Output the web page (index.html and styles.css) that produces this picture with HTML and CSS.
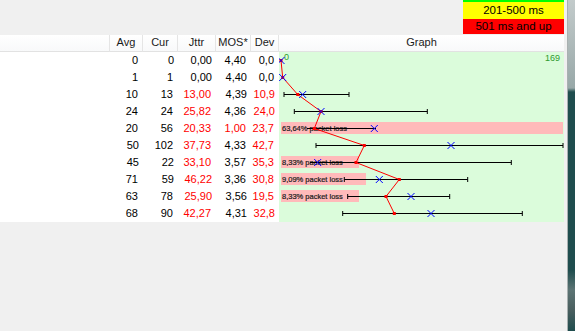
FILE: index.html
```html
<!DOCTYPE html>
<html lang="en">
<head>
    <meta charset="UTF-8">
    <title>Ping Monitor</title>
    <link rel="stylesheet" href="styles.css">
</head>
<body>
    <div class="window">
        <div class="main">
            <div class="topbar">
                <div class="legend">
                    <div class="legend-green"></div>
                    <div class="legend-yellow">201-500 ms</div>
                    <div class="legend-red">501 ms and up</div>
                </div>
            </div>

            <div class="table">
                <div class="th"></div>
                <div class="th">Avg</div>
                <div class="th">Cur</div>
                <div class="th">Jttr</div>
                <div class="th">MOS*</div>
                <div class="th">Dev</div>
                <div class="th th-last">Graph</div>

                <div class="graph-cell">
                    <svg class="graph" width="285" height="170" viewBox="0 0 285 170">
                        <!-- packet loss bars -->
                        <rect class="loss" x="2" y="70" width="282" height="12"/>
                        <rect class="loss" x="2" y="104" width="78" height="12"/>
                        <rect class="loss" x="2" y="121" width="85" height="12"/>
                        <rect class="loss" x="2" y="138" width="78" height="12"/>
                        <text class="loss-text" x="3" y="79">63,64% packet loss</text>
                        <text class="loss-text" x="3" y="113">8,33% packet loss</text>
                        <text class="loss-text" x="3" y="130">9,09% packet loss</text>
                        <text class="loss-text" x="3" y="147">8,33% packet loss</text>

                        <text class="scale" x="5" y="8">0</text>
                        <text class="scale" x="281" y="9" text-anchor="end">169</text>

                        <!-- min / max ranges -->
                        <g class="range">
                            <path d="M5 42.5H70M5 40v5M70 40v5"/>
                            <path d="M15.3 59.5H148.3M15.3 57v5M148.3 57v5"/>
                            <path d="M28 76.5H97"/>
                            <path d="M37 93.5H284M37 91v5M284 91v5"/>
                            <path d="M31 110.5H232.3M232.3 108v5"/>
                            <path d="M65.3 127.5H188.7M65.3 125v5M188.7 125v5"/>
                            <path d="M68.7 144.5H170.7M68.7 142v5M170.7 142v5"/>
                            <path d="M63.7 161.5H243.3M63.7 159v5M243.3 159v5"/>
                        </g>

                        <!-- average line -->
                        <polyline class="avg-line" points="2,8.5 3.7,25.5 18.7,42.5 42,59.5 35.3,76.5 85.3,93.5 77,110.5 120.3,127.5 107,144.5 115.3,161.5"/>
                        <g class="avg-dot">
                            <rect x="0.5" y="7" width="3" height="3"/>
                            <rect x="2.2" y="24" width="3" height="3"/>
                            <rect x="17.2" y="41" width="3" height="3"/>
                            <rect x="40.5" y="58" width="3" height="3"/>
                            <rect x="33.8" y="75" width="3" height="3"/>
                            <rect x="83.8" y="92" width="3" height="3"/>
                            <rect x="75.5" y="109" width="3" height="3"/>
                            <rect x="118.8" y="126" width="3" height="3"/>
                            <rect x="105.5" y="143" width="3" height="3"/>
                            <rect x="113.8" y="160" width="3" height="3"/>
                        </g>

                        <!-- current value -->
                        <g class="cur">
                            <path d="M-1.5 5l7 7M-1.5 12l7-7"/>
                            <path d="M0.2 22l7 7M0.2 29l7-7"/>
                            <path d="M20.2 39l7 7M20.2 46l7-7"/>
                            <path d="M38.5 56l7 7M38.5 63l7-7"/>
                            <path d="M91.8 73l7 7M91.8 80l7-7"/>
                            <path d="M168.5 90l7 7M168.5 97l7-7"/>
                            <path d="M35.2 107l7 7M35.2 114l7-7"/>
                            <path d="M96.8 124l7 7M96.8 131l7-7"/>
                            <path d="M128.5 141l7 7M128.5 148l7-7"/>
                            <path d="M148.5 158l7 7M148.5 165l7-7"/>
                        </g>
                    </svg>
                </div>

                <div></div><div class="td">0</div><div class="td">0</div><div class="td">0,00</div><div class="td">4,40</div><div class="td">0,0</div>
                <div></div><div class="td">1</div><div class="td">1</div><div class="td">0,00</div><div class="td">4,40</div><div class="td">0,0</div>
                <div></div><div class="td">10</div><div class="td">13</div><div class="td bad">13,00</div><div class="td">4,39</div><div class="td bad">10,9</div>
                <div></div><div class="td">24</div><div class="td">24</div><div class="td bad">25,82</div><div class="td">4,36</div><div class="td bad">24,0</div>
                <div></div><div class="td">20</div><div class="td">56</div><div class="td bad">20,33</div><div class="td bad">1,00</div><div class="td bad">23,7</div>
                <div></div><div class="td">50</div><div class="td">102</div><div class="td bad">37,73</div><div class="td">4,33</div><div class="td bad">42,7</div>
                <div></div><div class="td">45</div><div class="td">22</div><div class="td bad">33,10</div><div class="td">3,57</div><div class="td bad">35,3</div>
                <div></div><div class="td">71</div><div class="td">59</div><div class="td bad">46,22</div><div class="td">3,36</div><div class="td bad">30,8</div>
                <div></div><div class="td">63</div><div class="td">78</div><div class="td bad">25,90</div><div class="td">3,56</div><div class="td bad">19,5</div>
                <div></div><div class="td">68</div><div class="td">90</div><div class="td bad">42,27</div><div class="td">4,31</div><div class="td bad">32,8</div>
            </div>
        </div>
        <div class="scrollbar"></div>
    </div>
</body>
</html>
```

FILE: styles.css
```css
body {
    margin: 0;
    background-color: #f0f0f0;
    font-family: "Liberation Sans", Arial, sans-serif;
    font-size: 11px;
    color: #000;
}
.window {
    display: flex;
    height: 331px;
    overflow: hidden;
}
.main {
    flex: 1;
}
.topbar {
    height: 35px;
    display: flex;
    justify-content: flex-end;
    padding-right: 3px;
}
.legend {
    width: 101px;
    font-size: 11.5px;
    text-align: center;
}
.legend-green {
    height: 2px;
    background-color: #00ff00;
}
.legend-yellow {
    height: 17px;
    line-height: 17px;
    background-color: #ffff00;
}
.legend-red {
    height: 15px;
    line-height: 15px;
    background-color: #ff0000;
}
.table {
    width: 564px;
    display: grid;
    grid-template-columns: 110px 33px 35px 38px 35px 28px 285px;
    grid-auto-rows: 17px;
    background-color: #ffffff;
}
.th {
    box-sizing: border-box;
    height: 17px;
    line-height: 15px;
    text-align: center;
    color: #1a1a1a;
    border-right: 1px solid #e5e5e5;
    border-bottom: 1px solid #e2e2e2;
    background: linear-gradient(#ffffff, #f8f9fa);
}
.th-last {
    border-right: none;
}
.td {
    line-height: 17px;
    text-align: right;
    padding-right: 5px;
}
.td:nth-child(7n+4), .td:nth-child(7n+5) {
    padding-right: 4px;
}
.bad {
    color: #ff0000;
}
.graph-cell {
    grid-column: 7;
    grid-row: 2 / 12;
    background-color: #dbfcdb;
}
.graph {
    display: block;
}
.loss {
    fill: #ffbaba;
}
.loss-text {
    font-size: 7.5px;
    fill: #1a1a1a;
    stroke: #1a1a1a;
    stroke-width: 0.2;
}
.scale {
    font-size: 9px;
    fill: #2f9a2f;
}
.range path {
    stroke: #000;
    stroke-width: 1;
    fill: none;
}
.avg-line {
    fill: none;
    stroke: #ff0000;
    stroke-width: 1;
}
.avg-dot rect {
    fill: #ff0000;
}
.cur path {
    stroke: #0000ff;
    stroke-width: 1;
    fill: none;
}
.scrollbar {
    width: 7px;
    border-left: 1px solid #a9b0b0;
    background: linear-gradient(#c3cbcb 0, #98a8a8 88px, #1f4d4e 92px, #1f4d4e 270px, #5c7474 290px, #4a5f5f 310px, #1f4d4e 331px);
}
```
